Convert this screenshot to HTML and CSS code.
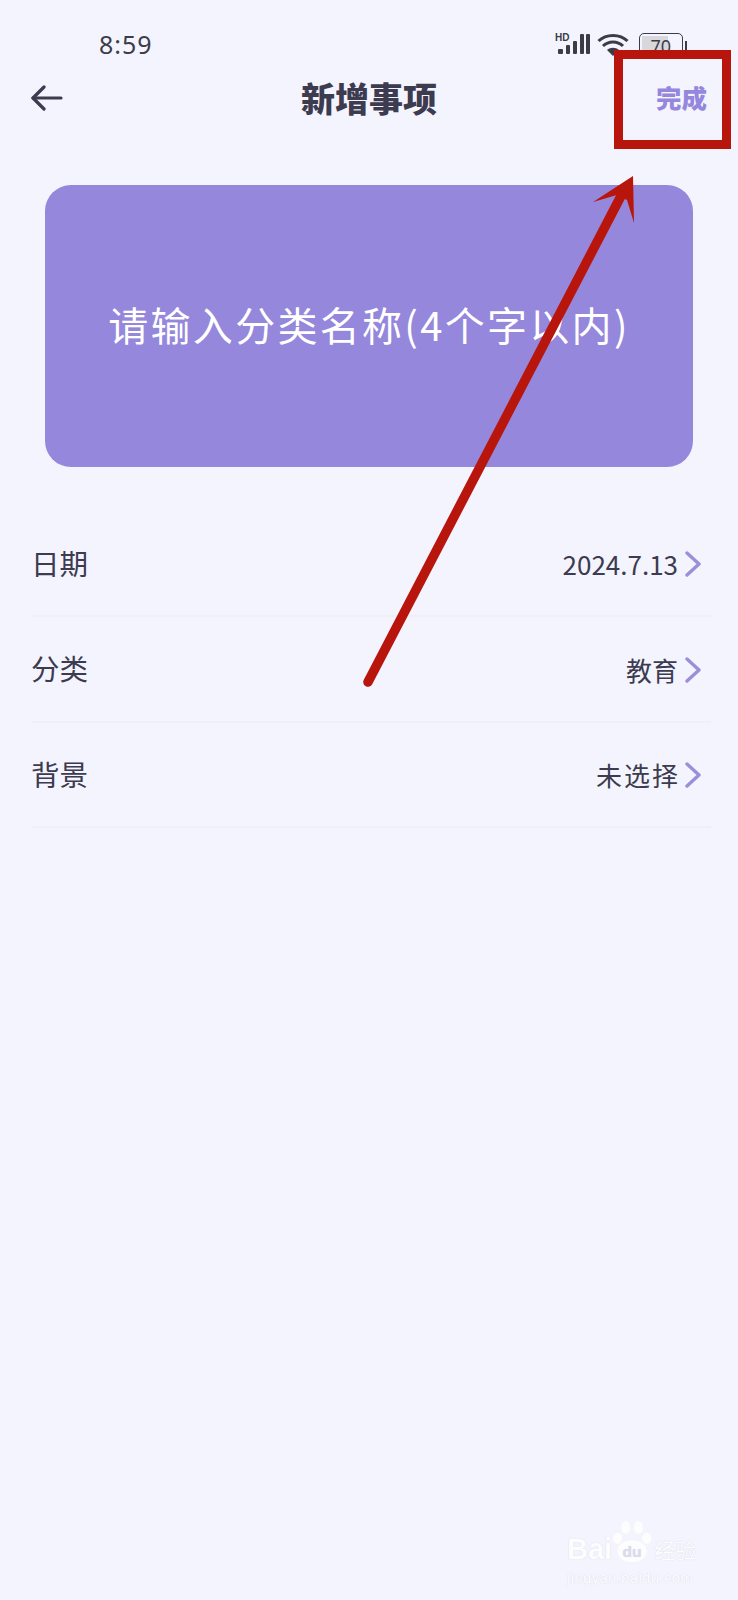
FILE: index.html
```html
<!DOCTYPE html>
<html lang="zh-CN">
<head>
  <meta charset="UTF-8">
  <meta name="viewport" content="width=device-width, initial-scale=1.0">
  <title>新增事项</title>
  <link rel="stylesheet" href="styles.css">
</head>
<body>
  <div class="status-bar">
    <span class="time">8:59</span>
    <div class="status-icons">
      <svg class="signal" width="36" height="23" viewBox="0 0 36 23">
        <text x="0" y="9" class="hd">HD</text>
        <rect x="3" y="17" width="5" height="5" rx="1"/>
        <rect x="11" y="13" width="4" height="9" rx="1"/>
        <rect x="18" y="9" width="4" height="13" rx="1"/>
        <rect x="25" y="2" width="4" height="20" rx="1"/>
        <rect x="31" y="2" width="4" height="20" rx="1"/>
      </svg>
      <svg class="wifi" width="32" height="24" viewBox="0 0 32 24" fill="none" stroke="#3c3c48" stroke-width="3">
        <path d="M1.5 9 C9 1.5 23 1.5 30.5 9"/>
        <path d="M6 14 C11.500 8.500 20.500 8.500 26 14"/>
        <path d="M10 18 L16 24 L22 18 C18.500 15 13.500 15 10 18Z" fill="#3c3c48" stroke="none"/>
      </svg>
      <div class="battery"><span class="level">70</span></div>
      <span class="battery-cap"></span>
    </div>
  </div>

  <header class="topbar">
    <svg class="back" width="32" height="26" viewBox="0 0 32 26" fill="none" stroke="#3c3b4f" stroke-width="3.200" stroke-linecap="round" stroke-linejoin="round">
      <path d="M30 13H2"/>
      <path d="M13 2 2 13 13 24"/>
    </svg>
    <h1>新增事项</h1>
    <a class="done" href="#">完成</a>
  </header>

  <main>
    <div class="name-card">请输入分类名称(4个字以内)</div>

    <div class="rows">
      <div class="row">
        <span class="label">日期</span>
        <span class="value">2024.7.13</span>
        <svg class="chev" width="16" height="26" viewBox="0 0 16 26" fill="none" stroke="#9b8fd8" stroke-width="3.400" stroke-linecap="round" stroke-linejoin="round"><path d="M2 2 14 13 2 24"/></svg>
      </div>
      <div class="row">
        <span class="label">分类</span>
        <span class="value">教育</span>
        <svg class="chev" width="16" height="26" viewBox="0 0 16 26" fill="none" stroke="#9b8fd8" stroke-width="3.400" stroke-linecap="round" stroke-linejoin="round"><path d="M2 2 14 13 2 24"/></svg>
      </div>
      <div class="row">
        <span class="label">背景</span>
        <span class="value wide">未选择</span>
        <svg class="chev" width="16" height="26" viewBox="0 0 16 26" fill="none" stroke="#9b8fd8" stroke-width="3.400" stroke-linecap="round" stroke-linejoin="round"><path d="M2 2 14 13 2 24"/></svg>
      </div>
    </div>
  </main>

  <!-- annotation drawn over the screenshot -->
  <div class="mark-box"></div>
  <svg class="mark-arrow" width="738" height="700" viewBox="0 0 738 700">
    <path d="M368 682 L621 196" stroke="#b8160c" stroke-width="9.500" stroke-linecap="round" fill="none"/>
    <path d="M633 176 L593 202 L617 195 L627 200 L634 223 Z" fill="#b8160c"/>
  </svg>

  <div class="watermark">
    <div class="wm-top">
      <span class="wm-bai">Bai</span>
      <svg width="42" height="44" viewBox="0 0 46 48" class="paw">
        <ellipse cx="6" cy="20" rx="5" ry="6"/>
        <ellipse cx="15" cy="8" rx="5" ry="7"/>
        <ellipse cx="29" cy="8" rx="5" ry="7"/>
        <ellipse cx="38" cy="20" rx="5" ry="6"/>
        <ellipse cx="22" cy="34" rx="16" ry="12"/>
        <text x="22" y="40" class="wm-du">du</text>
      </svg>
      <span class="wm-cn">经验</span>
    </div>
    <div class="wm-url">jingyan.baidu.com</div>
  </div>
</body>
</html>
```

FILE: styles.css
```css
* {
  box-sizing: border-box;
}
html, body {
  margin: 0;
  height: 1600px;
  overflow: hidden;
}
body {
  position: relative;
  background: #f4f4fe;
  color: #3c3b4f;
  font-family: "Noto Sans CJK SC", "Noto Sans", sans-serif;
}
.status-bar {
  height: 66px;
  padding: 28px 51px 0 99px;
  display: flex;
  justify-content: space-between;
}
.time {
  font-family: "Noto Sans", sans-serif;
  font-size: 25px;
  line-height: 32px;
  letter-spacing: 1px;
  color: #3c3c48;
}
.status-icons {
  display: flex;
  align-items: flex-start;
  padding-top: 4px;
}
.signal {
  fill: #3c3c48;
}
.hd {
  font-family: "Liberation Sans", sans-serif;
  font-size: 10px;
  font-weight: 700;
}
.wifi {
  margin-left: 6px;
}
.battery {
  width: 44px;
  height: 24px;
  margin: 1px 0 0 10px;
  padding: 2px;
  border: 1.500px solid #3c3c48;
  border-radius: 5px;
  overflow: hidden;
}
.level {
  display: block;
  width: 70%;
  height: 100%;
  background: #d8d8dc;
  font-family: "Noto Sans", sans-serif;
  font-size: 18px;
  line-height: 20px;
  text-indent: 9px;
  white-space: nowrap;
  color: #3c3c48;
}
.battery-cap {
  width: 2.500px;
  height: 9px;
  margin: 9px 0 0 2px;
  background: #3c3c48;
}
.topbar {
  height: 66px;
  padding: 0 31px;
  display: flex;
  align-items: center;
  justify-content: space-between;
}
.back {
  margin-bottom: 2px;
}
.topbar h1 {
  margin: 0 0 4px 19px;
  font-size: 34px;
  font-weight: 900;
  color: #3c3b4f;
}
.done {
  margin-bottom: 6px;
  font-size: 25.500px;
  font-weight: 900;
  color: #9587dc;
  text-decoration: none;
}
main {
  padding: 53px 27px 0 32px;
}
.name-card {
  height: 282px;
  margin: 0 18px 0 13px;
  display: flex;
  align-items: center;
  justify-content: center;
  padding-bottom: 4px;
  background: #9587dc;
  border-radius: 26px;
  color: #fff;
  font-size: 40px;
  letter-spacing: 2.300px;
  white-space: nowrap;
}
.rows {
  margin-top: 44.500px;
}
.row {
  height: 105.500px;
  display: flex;
  align-items: center;
  padding: 0 10px 0 0;
  border-bottom: 2px solid #efeff7;
}
.label {
  flex: 1;
  font-size: 28.500px;
  margin-bottom: 2px;
  margin-left: -1px;
}
.value {
  font-size: 26px;
  margin: 1px 7px 0 0;
}
.value.wide {
  letter-spacing: 2px;
  margin-right: 5px;
}
.chev {
  margin-top: 2px;
}
.mark-box {
  position: absolute;
  left: 614px;
  top: 50px;
  width: 117px;
  height: 99px;
  border: 9px solid #b8160c;
}
.mark-arrow {
  position: absolute;
  left: 0;
  top: 0;
}
.watermark {
  position: absolute;
  left: 567px;
  top: 1520px;
  color: #fff;
  text-shadow: 0 0 1px #c8c8dc;
  opacity: 0.85;
}
.wm-top {
  display: flex;
  align-items: flex-end;
  height: 44px;
}
.wm-bai {
  font-family: "Liberation Sans", sans-serif;
  font-size: 29px;
  font-weight: 700;
  line-height: 30px;
}
.paw {
  fill: #fff;
}
.wm-du {
  fill: #d8d8ea;
  font-family: "Liberation Sans", sans-serif;
  font-size: 17px;
  font-weight: 700;
  text-anchor: middle;
}
.wm-cn {
  font-size: 21px;
  line-height: 30px;
}
.wm-url {
  margin-top: 4px;
  font-family: "Liberation Sans", sans-serif;
  font-size: 15px;
  letter-spacing: 0.300px;
  line-height: 20px;
}
```
